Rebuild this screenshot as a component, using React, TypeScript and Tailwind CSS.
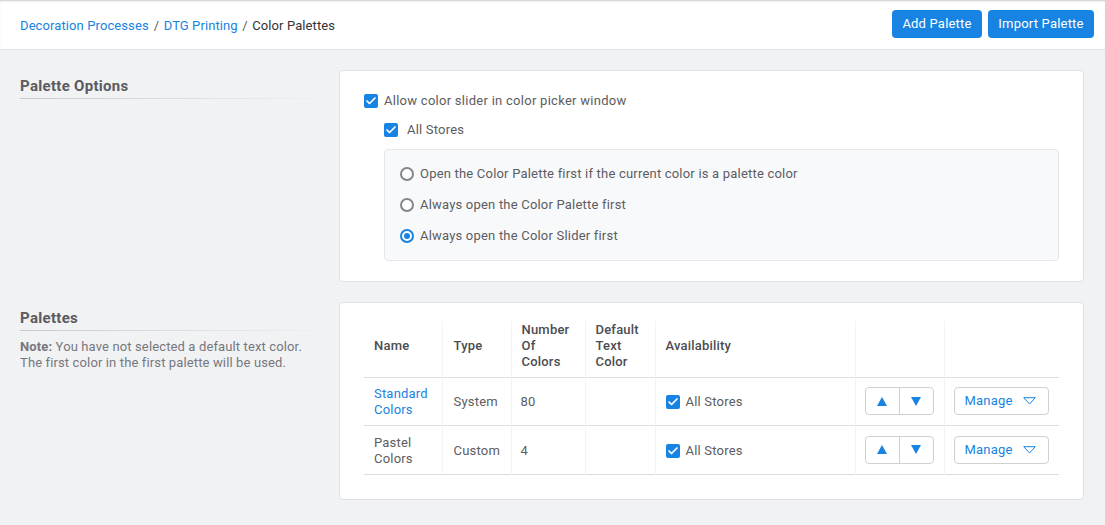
import { Check } from 'lucide-react';

function CheckBox() {
  return (
    <span className="flex h-[14px] w-[14px] shrink-0 items-center justify-center rounded-[2px] bg-[#1783e2]">
      <Check className="h-[12px] w-[12px] text-white" strokeWidth={3.5} />
    </span>
  );
}

function Radio({ on, label }: { on?: boolean; label: string }) {
  return (
    <div className="flex h-[31px] items-center">
      <span
        className={`flex h-[14px] w-[14px] shrink-0 items-center justify-center rounded-full border-2 bg-white ${
          on ? 'border-[#1783e2]' : 'border-[#85858c]'
        }`}
      >
        {on && <span className="h-[6px] w-[6px] rounded-full bg-[#1783e2]" />}
      </span>
      <span className="ml-[6px]">{label}</span>
    </div>
  );
}

function SectionTitle({ children }: { children: string }) {
  return (
    <h2 className="border-b border-dotted border-[#d3d4d8] text-[15px] font-bold leading-[24px] tracking-[0.3px] text-[#5a5a5f] [border-image:linear-gradient(to_right,#c9cace,#f1f2f4)_1]">
      {children}
    </h2>
  );
}

function MoveButtons() {
  return (
    <div className="flex h-[28px] w-[69px] rounded-[4px] border border-[#cfd0d4] bg-white">
      <button className="flex flex-1 items-center justify-center border-r border-[#cfd0d4] text-[#1783e2]">
        <svg width="10" height="9" viewBox="0 0 10 9">
          <path d="M5 0 L10 9 L0 9 Z" fill="currentColor" />
        </svg>
      </button>
      <button className="flex flex-1 items-center justify-center text-[#1783e2]">
        <svg width="10" height="9" viewBox="0 0 10 9">
          <path d="M0 0 L10 0 L5 9 Z" fill="currentColor" />
        </svg>
      </button>
    </div>
  );
}

function ManageButton() {
  return (
    <button className="flex h-[28px] w-[95px] items-center rounded-[4px] border border-[#cfd0d4] bg-white pl-[10px] text-[#1783e2]">
      Manage
      <svg className="ml-[10px]" width="13" height="8" viewBox="0 0 13 8">
        <path d="M0.7 0.7 L12.3 0.7 L6.5 7 Z" fill="none" stroke="currentColor" strokeWidth="1" />
      </svg>
    </button>
  );
}

const rows = [
  { name: ['Standard', 'Colors'], link: true, type: 'System', count: '80' },
  { name: ['Pastel', 'Colors'], link: false, type: 'Custom', count: '4' },
];

export default function App() {
  return (
    <div className="min-h-[525px] bg-[#f1f2f4] font-['Roboto',sans-serif] text-[13px] leading-[16px] tracking-[0.2px] text-[#5c5c61]">
      <header className="flex h-[50px] items-start justify-between border-b border-[#e2e3e6] bg-white pl-[20px] pr-[11px] pt-[10px] shadow-[inset_0_2px_2px_-1px_#c8c9cc]">
        <nav className="mt-[8px] flex items-center tracking-[0.1px] text-[#333338]">
          <a className="text-[#1783e2]">Decoration Processes</a>
          <span className="ml-[5px] mr-[4.5px] text-[#5c5c61]">/</span>
          <a className="text-[#1783e2]">DTG Printing</a>
          <span className="mx-[4.5px] text-[#5c5c61]">/</span>
          <span>Color Palettes</span>
        </nav>
        <div className="flex gap-[6px]">
          <button className="h-[28px] w-[90px] rounded-[4px] bg-[#1783e2] text-white">Add Palette</button>
          <button className="h-[28px] w-[106px] rounded-[4px] bg-[#1783e2] text-white">Import Palette</button>
        </div>
      </header>

      <main className="flex flex-col gap-[20px] pb-[25px] pl-[20px] pr-[21px] pt-[20px]">
        <section className="flex">
          <div className="w-[319px] shrink-0 pt-[4px]">
            <SectionTitle>Palette Options</SectionTitle>
          </div>
          <div className="h-[212px] flex-1 rounded-[4px] border border-[#e0e1e4] bg-white pl-[24px] pr-[24px] pt-[22px]">
            <label className="flex h-[16px] items-center gap-[6px] tracking-[0.27px]">
              <CheckBox />
              Allow color slider in color picker window
            </label>
            <label className="ml-[20px] mt-[13px] flex h-[16px] items-center gap-[9px]">
              <CheckBox />
              All Stores
            </label>
            <div className="ml-[20px] mt-[11px] h-[112px] rounded-[4px] border border-[#e6e7ea] bg-[#f8f9fb] pl-[15px] pt-[8px]">
              <Radio label="Open the Color Palette first if the current color is a palette color" />
              <Radio label="Always open the Color Palette first" />
              <Radio on label="Always open the Color Slider first" />
            </div>
          </div>
        </section>

        <section className="flex">
          <div className="w-[319px] shrink-0 pr-[30px] pt-[4px]">
            <div className="-mr-[30px]">
              <SectionTitle>Palettes</SectionTitle>
            </div>
            <p className="mt-[8px] tracking-[0.13px] text-[#77777c]">
              <b className="font-bold">Note:</b> You have not selected a default text color. The first color in the first palette will be used.
            </p>
          </div>
          <div className="h-[198px] flex-1 rounded-[4px] border border-[#e0e1e4] bg-white pl-[24px] pr-[24px] pt-[18px]">
            <table className="w-full table-fixed border-collapse">
              <colgroup>
                <col className="w-[78px]" />
                <col className="w-[69px]" />
                <col className="w-[74px]" />
                <col className="w-[70px]" />
                <col className="w-[200px]" />
                <col className="w-[89px]" />
                <col className="w-[115px]" />
              </colgroup>
              <thead>
                <tr className="h-[56px] border-b border-[#dcdde0] text-left text-[#4c4c51]">
                  <th className="pb-[6px] pl-[10px] font-medium">Name</th>
                  <th className="border-l border-[#f2f3f5] pb-[6px] pl-[11px] font-medium">Type</th>
                  <th className="border-l border-[#f2f3f5] pb-[6px] pl-[10px] font-medium">
                    Number
                    <br />
                    Of
                    <br />
                    Colors
                  </th>
                  <th className="border-l border-[#f2f3f5] pb-[6px] pl-[10px] font-medium">
                    Default
                    <br />
                    Text
                    <br />
                    Color
                  </th>
                  <th className="border-l border-[#f2f3f5] pb-[6px] pl-[10px] font-medium">Availability</th>
                  <th className="border-l border-[#f2f3f5]" />
                  <th className="border-l border-[#f2f3f5]" />
                </tr>
              </thead>
              <tbody>
                {rows.map((row) => (
                  <tr key={row.type} className="h-[48.5px] border-b border-[#dcdde0]">
                    <td className={`pl-[10px] pt-[2px] ${row.link ? 'text-[#1783e2]' : ''}`}>
                      {row.name[0]}
                      <br />
                      {row.name[1]}
                    </td>
                    <td className="border-l border-[#f2f3f5] pl-[11px] pt-[2px]">{row.type}</td>
                    <td className="border-l border-[#f2f3f5] pl-[9px] pt-[2px]">{row.count}</td>
                    <td className="border-l border-[#f2f3f5]" />
                    <td className="border-l border-[#f2f3f5] pl-[10px] pt-[2px]">
                      <div className="flex items-center gap-[6px]">
                        <CheckBox />
                        All Stores
                      </div>
                    </td>
                    <td className="border-l border-[#f2f3f5] pl-[9px]">
                      <MoveButtons />
                    </td>
                    <td className="border-l border-[#f2f3f5] pl-[9px]">
                      <ManageButton />
                    </td>
                  </tr>
                ))}
              </tbody>
            </table>
          </div>
        </section>
      </main>
    </div>
  );
}
